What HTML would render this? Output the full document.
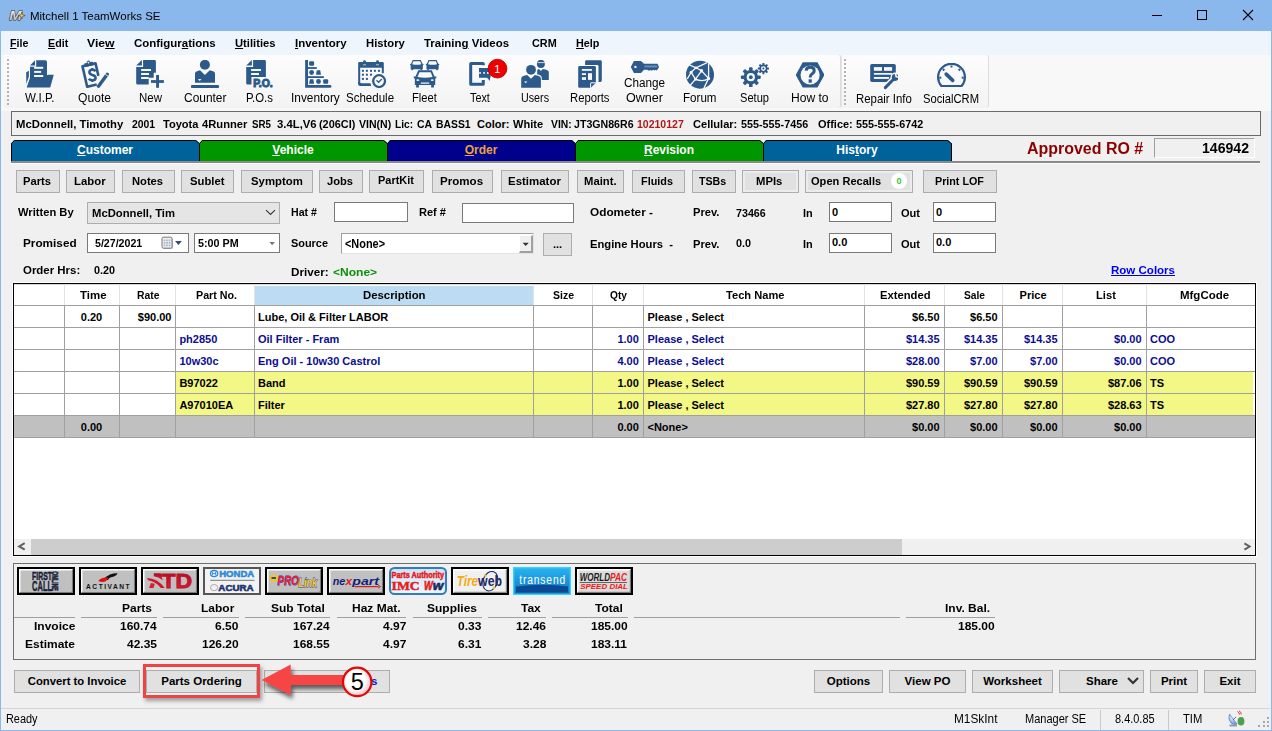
<!DOCTYPE html>
<html><head><meta charset="utf-8"><style>
html,body{margin:0;padding:0;width:1272px;height:731px;overflow:hidden;background:#f0f0f0;font-family:"Liberation Sans", sans-serif}
.a{position:absolute;display:block}
.t{position:absolute;white-space:pre;font-family:"Liberation Sans", sans-serif}
u{text-decoration:underline;text-underline-offset:1px}
</style></head><body>
<div class="a" style="left:0px;top:0px;width:1272px;height:31px;background:#8bb8ec"></div>
<div class="a" style="left:0px;top:31px;width:1272px;height:24px;background:#eef5fd"></div>
<div class="a" style="left:0px;top:55px;width:1272px;height:56px;background:#f8f8f8"></div>
<div class="a" style="left:0px;top:0px;width:1px;height:731px;background:#8bb8ec"></div>
<div class="a" style="left:1271px;top:0px;width:1px;height:731px;background:#8bb8ec"></div>
<div class="a" style="left:0px;top:730px;width:1272px;height:1px;background:#8bb8ec"></div>
<svg class="a" style="left:8px;top:8px" width="18" height="14" viewBox="0 0 18 14"><defs><linearGradient id="mg" x1="0" y1="0" x2="0" y2="1"><stop offset="0" stop-color="#f4f4f4"/><stop offset="1" stop-color="#b8b8b8"/></linearGradient></defs><text x="1.2" y="11.8" font-family="Liberation Sans" font-weight="bold" font-style="italic" font-size="13" textLength="12.5" lengthAdjust="spacingAndGlyphs" fill="url(#mg)" stroke="#2a2a2a" stroke-width="0.9" paint-order="stroke">M</text><path d="M13.8 4 L14.7 6.8 L17.2 7.6 L14.7 8.4 L13.8 11 L12.9 8.4 L10.4 7.6 L12.9 6.8 Z" fill="#f8c850" stroke="#3a2a10" stroke-width="0.5"/></svg>
<div class="t" style="left:30.20px;top:11px;font-size:11.5px;line-height:11.5px;font-weight:normal;color:#000;transform:scaleX(0.9992);transform-origin:0 0;">Mitchell 1 TeamWorks SE</div>
<div class="a" style="left:1152px;top:15px;width:10px;height:1px;background:#000"></div>
<div class="a" style="left:1197px;top:10px;width:10px;height:10px;border:1px solid #000;box-sizing:border-box"></div>
<svg class="a" style="left:1242px;top:9px" width="12" height="12" viewBox="0 0 12 12"><path d="M1 1 L11 11 M11 1 L1 11" stroke="#000" stroke-width="1.1"/></svg>
<div class="t" style="left:10.00px;top:38px;font-size:11.5px;line-height:11.5px;font-weight:bold;color:#000;transform:scaleX(0.9293);transform-origin:0 0;"><u>F</u>ile</div>
<div class="t" style="left:47.80px;top:38px;font-size:11.5px;line-height:11.5px;font-weight:bold;color:#000;transform:scaleX(0.9309);transform-origin:0 0;"><u>E</u>dit</div>
<div class="t" style="left:87.30px;top:38px;font-size:11.5px;line-height:11.5px;font-weight:bold;color:#000;transform:scaleX(1.0613);transform-origin:0 0;">Vie<u>w</u></div>
<div class="t" style="left:134.00px;top:38px;font-size:11.5px;line-height:11.5px;font-weight:bold;color:#000;transform:scaleX(0.9976);transform-origin:0 0;">Configur<u>a</u>tions</div>
<div class="t" style="left:235.00px;top:38px;font-size:11.5px;line-height:11.5px;font-weight:bold;color:#000;transform:scaleX(0.9759);transform-origin:0 0;"><u>U</u>tilities</div>
<div class="t" style="left:295.20px;top:38px;font-size:11.5px;line-height:11.5px;font-weight:bold;color:#000;transform:scaleX(0.9961);transform-origin:0 0;"><u>I</u>nventory</div>
<div class="t" style="left:366.00px;top:38px;font-size:11.5px;line-height:11.5px;font-weight:bold;color:#000;transform:scaleX(0.9798);transform-origin:0 0;">History</div>
<div class="t" style="left:424.30px;top:38px;font-size:11.5px;line-height:11.5px;font-weight:bold;color:#000;transform:scaleX(0.9953);transform-origin:0 0;">Trainin<u>g</u> Videos</div>
<div class="t" style="left:532.00px;top:38px;font-size:11.5px;line-height:11.5px;font-weight:bold;color:#000;transform:scaleX(0.9427);transform-origin:0 0;">CRM</div>
<div class="t" style="left:576.00px;top:38px;font-size:11.5px;line-height:11.5px;font-weight:bold;color:#000;transform:scaleX(0.9398);transform-origin:0 0;"><u>H</u>elp</div>
<div class="a" style="left:4px;top:55px;width:836px;height:53px;background:linear-gradient(#fdfdfd,#f3f3f3);border-right:1px solid #dcdcdc;border-radius:0 3px 3px 0"></div>
<div class="a" style="left:841px;top:55px;width:146px;height:53px;background:linear-gradient(#fdfdfd,#f3f3f3);border-right:1px solid #dcdcdc;border-left:1px solid #e4e4e4;border-radius:0 3px 3px 0"></div>
<div class="a" style="left:7px;top:59px;width:2px;height:2px;background:#b4b4b4"></div>
<div class="a" style="left:7px;top:63px;width:2px;height:2px;background:#b4b4b4"></div>
<div class="a" style="left:7px;top:67px;width:2px;height:2px;background:#b4b4b4"></div>
<div class="a" style="left:7px;top:71px;width:2px;height:2px;background:#b4b4b4"></div>
<div class="a" style="left:7px;top:75px;width:2px;height:2px;background:#b4b4b4"></div>
<div class="a" style="left:7px;top:79px;width:2px;height:2px;background:#b4b4b4"></div>
<div class="a" style="left:7px;top:83px;width:2px;height:2px;background:#b4b4b4"></div>
<div class="a" style="left:7px;top:87px;width:2px;height:2px;background:#b4b4b4"></div>
<div class="a" style="left:7px;top:91px;width:2px;height:2px;background:#b4b4b4"></div>
<div class="a" style="left:7px;top:95px;width:2px;height:2px;background:#b4b4b4"></div>
<div class="a" style="left:7px;top:99px;width:2px;height:2px;background:#b4b4b4"></div>
<div class="a" style="left:7px;top:103px;width:2px;height:2px;background:#b4b4b4"></div>
<div class="a" style="left:844px;top:59px;width:2px;height:2px;background:#b4b4b4"></div>
<div class="a" style="left:844px;top:63px;width:2px;height:2px;background:#b4b4b4"></div>
<div class="a" style="left:844px;top:67px;width:2px;height:2px;background:#b4b4b4"></div>
<div class="a" style="left:844px;top:71px;width:2px;height:2px;background:#b4b4b4"></div>
<div class="a" style="left:844px;top:75px;width:2px;height:2px;background:#b4b4b4"></div>
<div class="a" style="left:844px;top:79px;width:2px;height:2px;background:#b4b4b4"></div>
<div class="a" style="left:844px;top:83px;width:2px;height:2px;background:#b4b4b4"></div>
<div class="a" style="left:844px;top:87px;width:2px;height:2px;background:#b4b4b4"></div>
<div class="a" style="left:844px;top:91px;width:2px;height:2px;background:#b4b4b4"></div>
<div class="a" style="left:844px;top:95px;width:2px;height:2px;background:#b4b4b4"></div>
<div class="a" style="left:844px;top:99px;width:2px;height:2px;background:#b4b4b4"></div>
<div class="a" style="left:844px;top:103px;width:2px;height:2px;background:#b4b4b4"></div>
<svg class="a" style="left:26px;top:60px" width="28" height="28" viewBox="0 0 28 28"><path d="M4 5.6 L9 0.3 V5.6 Z" fill="#2c5a8a"/><path d="M4 6.8 H10.2 V0.2 H19.5 Q21 0.2 21 1.7 V15.3 L22.3 14.7 H27.8 L24.2 27.5 H0.7 L4 17.7 Z" fill="#2c5a8a"/><rect x="8.1" y="6.8" width="9.1" height="2" fill="#f8f8f8"/><rect x="8.1" y="10.9" width="7" height="2" fill="#f8f8f8"/><rect x="8.1" y="15" width="9.1" height="2" fill="#f8f8f8"/><path d="M0.2 12.3 L2.9 10.8 V16.5 L0.3 24 Z" fill="#2c5a8a"/></svg>
<svg class="a" style="left:81px;top:60px" width="28" height="28" viewBox="0 0 28 28"><g transform="rotate(-13 10 14)"><path d="M16.8 17.5 V4.6 H3.4 V25.6 H13.2" fill="none" stroke="#2c5a8a" stroke-width="2.6" stroke-linejoin="round"/><path d="M5.5 6 V3.2 Q5.5 2.2 6.5 2.2 H8.2 Q8.6 0.3 10.1 0.3 Q11.6 0.3 12 2.2 H13.7 Q14.7 2.2 14.7 3.2 V6 Z" fill="#2c5a8a"/><circle cx="10.1" cy="2.3" r="0.9" fill="#f8f8f8"/></g><path d="M14.6 11.2 Q13.6 9.8 11.4 9.8 Q8.4 9.8 8.4 12.3 Q8.4 14.2 11.4 15 Q14.6 15.7 14.6 18 Q14.6 20.3 11.4 20.3 Q8.9 20.3 7.8 18.8" fill="none" stroke="#2c5a8a" stroke-width="2.5"/><path d="M11.4 7.9 V10 M11.4 20 V22" stroke="#2c5a8a" stroke-width="2.2"/><path d="M17.5 26.2 L26.3 14.3" stroke="#2c5a8a" stroke-width="3.4" stroke-linecap="round"/><path d="M24.2 14.1 L27 16.2" stroke="#f8f8f8" stroke-width="0.9"/></svg>
<svg class="a" style="left:136px;top:60px" width="28" height="28" viewBox="0 0 28 28"><path d="M0.2 5.6 L5.9 0 V5.6 Z" fill="#2c5a8a"/><path d="M0.2 6.9 H7.1 V0 H18.5 Q19.9 0 19.9 1.4 V12.7 H17.7 V17.7 H12.7 V24.6 H1.6 Q0.2 24.6 0.2 23.2 Z" fill="#2c5a8a"/><rect x="5.1" y="9" width="9.9" height="2" fill="#f8f8f8"/><rect x="5.1" y="13" width="7.9" height="2" fill="#f8f8f8"/><rect x="5.1" y="17" width="7.6" height="2" fill="#f8f8f8"/><rect x="20.1" y="15" width="2.9" height="12.8" fill="#2c5a8a"/><rect x="15" y="20.1" width="12.9" height="2.8" fill="#2c5a8a"/></svg>
<svg class="a" style="left:191px;top:60px" width="28" height="28" viewBox="0 0 28 28"><circle cx="13.9" cy="4.8" r="5" fill="#2c5a8a"/><path d="M4 22.7 V13.5 Q4 11.8 6 11.2 L9 10.2 L13.9 15 L18.8 10.2 L22 11.2 Q24 11.8 24 13.5 V22.7 Z" fill="#2c5a8a"/><path d="M7 19 L10.5 19 L8.7 21 Z" fill="#f8f8f8"/><rect x="0" y="25.1" width="28" height="2.9" rx="0.8" fill="#2c5a8a"/></svg>
<svg class="a" style="left:246px;top:60px" width="30" height="28" viewBox="0 0 30 28"><path d="M0.2 5.6 L5.9 0 V5.6 Z" fill="#2c5a8a"/><path d="M0.2 6.9 H7.1 V0 H18.5 Q19.9 0 19.9 1.4 V17 H5.5 V24.6 H1.6 Q0.2 24.6 0.2 23.2 Z" fill="#2c5a8a"/><rect x="5.1" y="9" width="9.9" height="2" fill="#f8f8f8"/><rect x="5.1" y="13" width="7.9" height="2" fill="#f8f8f8"/><text x="7.2" y="27.4" font-family="Liberation Sans" font-weight="bold" font-size="11.3" textLength="19.5" lengthAdjust="spacingAndGlyphs" fill="#2c5a8a" stroke="#2c5a8a" stroke-width="1.1">P.O.</text></svg>
<svg class="a" style="left:305px;top:60px" width="28" height="28" viewBox="0 0 28 28"><path d="M1.6 0.2 V26.4 H25" fill="none" stroke="#2c5a8a" stroke-width="2.9" stroke-linecap="round"/><rect x="3" y="7.1" width="8.8" height="1.8" fill="#2c5a8a"/><rect x="3" y="16.2" width="15.9" height="1.8" fill="#2c5a8a"/><rect x="4.1" y="1.2" width="5" height="4.5" rx="1.2" fill="#2c5a8a"/><circle cx="6.6" cy="12.5" r="2.4" fill="#2c5a8a"/><path d="M11.8 10.3 H15.2 L16 14.7 H11 Z" fill="#2c5a8a"/><path d="M4.9 19.2 H8.3 L9.1 23.8 H4.1 Z" fill="#2c5a8a"/><circle cx="13.5" cy="21.5" r="2.4" fill="#2c5a8a"/><rect x="18.2" y="19.2" width="5" height="4.6" rx="1.2" fill="#2c5a8a"/></svg>
<svg class="a" style="left:358px;top:60px" width="28" height="28" viewBox="0 0 28 28"><path d="M12 24.4 H2.2 Q1.2 24.4 1.2 23.4 V7" fill="none" stroke="#2c5a8a" stroke-width="2"/><path d="M24.8 13.2 V7" fill="none" stroke="#2c5a8a" stroke-width="2"/><path d="M0.2 7.8 V3.2 Q0.2 1.9 1.5 1.9 H24.5 Q25.8 1.9 25.8 3.2 V7.8 Z" fill="#2c5a8a"/><circle cx="6.5" cy="1.6" r="1.4" fill="#2c5a8a"/><circle cx="19.5" cy="1.6" r="1.4" fill="#2c5a8a"/><path d="M5 4.8 H8 M18 4.8 H21" stroke="#f8f8f8" stroke-width="0.7"/><rect x="3.9000000000000004" y="9.8" width="2" height="2" fill="#2c5a8a"/><rect x="7.9" y="9.8" width="2" height="2" fill="#2c5a8a"/><rect x="12" y="9.8" width="2" height="2" fill="#2c5a8a"/><rect x="15.899999999999999" y="9.8" width="2" height="2" fill="#2c5a8a"/><rect x="20" y="9.8" width="2" height="2" fill="#2c5a8a"/><rect x="3.9000000000000004" y="13.7" width="2" height="2" fill="#2c5a8a"/><rect x="7.9" y="13.7" width="2" height="2" fill="#2c5a8a"/><rect x="12" y="13.7" width="2" height="2" fill="#2c5a8a"/><rect x="3.9000000000000004" y="17.9" width="2" height="2" fill="#2c5a8a"/><rect x="7.9" y="17.9" width="2" height="2" fill="#2c5a8a"/><path d="M0.2 22 V24 Q0.2 26 2.5 26 H13.2 L12.6 23.4 H3.6 Q2.2 23.4 1.8 22 Z" fill="#2c5a8a"/><circle cx="21.1" cy="21.1" r="7.4" fill="#f8f8f8"/><circle cx="21.1" cy="21.1" r="5.9" fill="none" stroke="#2c5a8a" stroke-width="2.2"/><path d="M18.5 20.2 L20.6 22.3 L23.8 19" fill="none" stroke="#2c5a8a" stroke-width="1.3"/></svg>
<svg class="a" style="left:410px;top:60px" width="30" height="28" viewBox="0 0 30 28"><g transform="translate(-0.2 0) scale(0.58 0.64)"><path d="M5 0 H19 L21.8 6 L23.8 6.2 L23.5 7.6 L22.5 8.2 V14.5 H21.2 V16.8 H18.3 V14.5 H5.7 V16.8 H2.8 V14.5 H1.5 V8.2 L0.5 7.6 L0.2 6.2 L2.2 6 Z" fill="#2c5a8a"/><path d="M6.2 2 H17.8 L19.8 6.6 Q12 8.2 4.2 6.6 Z" fill="#f8f8f8"/></g><g transform="translate(15.6 0) scale(0.58 0.64)"><path d="M5 0 H19 L21.8 6 L23.8 6.2 L23.5 7.6 L22.5 8.2 V14.5 H21.2 V16.8 H18.3 V14.5 H5.7 V16.8 H2.8 V14.5 H1.5 V8.2 L0.5 7.6 L0.2 6.2 L2.2 6 Z" fill="#2c5a8a"/><path d="M6.2 2 H17.8 L19.8 6.6 Q12 8.2 4.2 6.6 Z" fill="#f8f8f8"/></g><rect x="1" y="10.2" width="29" height="1.2" fill="#f8f8f8"/><g transform="translate(3.4 10.3) scale(0.97 1.02)"><path d="M5 0 H19 L21.8 6 L23.8 6.2 L23.5 7.6 L22.5 8.2 V14.5 H21.2 V16.8 H18.3 V14.5 H5.7 V16.8 H2.8 V14.5 H1.5 V8.2 L0.5 7.6 L0.2 6.2 L2.2 6 Z" fill="#2c5a8a"/><path d="M6.2 2 H17.8 L19.8 6.6 Q12 8.2 4.2 6.6 Z" fill="#f8f8f8"/><ellipse cx="4.6" cy="9.6" rx="1.6" ry="0.9" fill="#f8f8f8"/><ellipse cx="19.4" cy="9.6" rx="1.6" ry="0.9" fill="#f8f8f8"/><rect x="7.5" y="11.9" width="9" height="1.2" rx="0.6" fill="#f8f8f8"/></g></svg>
<svg class="a" style="left:466px;top:58px" width="44" height="32" viewBox="0 0 44 32"><path d="M18.8 7.3 V5.8 Q18.8 3.9 16.9 3.9 H5 Q3.2 3.9 3.2 5.8 V25.9 Q3.2 27.8 5 27.8 H16.9 Q18.8 27.8 18.8 25.9 V22.1 H15.8 V24.8 H6.2 V6.9 H15.8 V7.3 Z" fill="#2c5a8a"/><path d="M13 10 H24.6 V19.7 H24 V22.9 L21 19.7 H13 Z" rx="1" fill="#2c5a8a"/><rect x="13.2" y="14.1" width="1.7" height="1.7" fill="#f8f8f8"/><rect x="17.2" y="14.1" width="1.7" height="1.7" fill="#f8f8f8"/><rect x="21" y="14.1" width="1.7" height="1.7" fill="#f8f8f8"/><circle cx="31.5" cy="10.6" r="9.4" fill="#ee0000" stroke="#a80000" stroke-width="0.8"/><text x="31.3" y="14.5" font-family="Liberation Sans" font-size="11" fill="#fff" text-anchor="middle">1</text></svg>
<svg class="a" style="left:521px;top:60px" width="28" height="28" viewBox="0 0 28 28"><circle cx="19.9" cy="3.9" r="4" fill="#2c5a8a"/><path d="M16.5 2.6 H24.5" stroke="#f8f8f8" stroke-width="0.8"/><path d="M16.2 19.9 V11 Q16.2 9.2 18 9 L19.9 11 L21.8 9 Q27.8 9.8 27.8 12 V19.9 Z" fill="#2c5a8a" stroke="#f8f8f8" stroke-width="0"/><circle cx="10" cy="9.8" r="5.9" fill="#f8f8f8"/><circle cx="10" cy="9.8" r="4.9" fill="#2c5a8a"/><path d="M-0.8 28.6 V18.2 Q-0.8 15.4 3 14.6 L6 14 L10 18 L14 14 L17 14.6 Q20.8 15.4 20.8 18.2 V28.6 Z" fill="#f8f8f8"/><path d="M0.2 27.8 V18.5 Q0.2 16.5 3 15.8 L6.2 15 L10 18.8 L13.8 15 L17 15.8 Q19.9 16.5 19.9 18.5 V27.8 Z" fill="#2c5a8a"/><path d="M3 21.4 L6.4 21.4 L4.7 23.2 Z" fill="#f8f8f8"/></svg>
<svg class="a" style="left:578px;top:60px" width="28" height="28" viewBox="0 0 28 28"><path d="M7.1 1.6 Q7.1 0.2 8.5 0.2 H22.4 Q23.8 0.2 23.8 1.6 V20.5 Q23.8 21.9 22.4 21.9 H20.5 V6 Q20.5 5 19 5 H7.1 Z" fill="#2c5a8a"/><path d="M0.2 7.5 Q0.2 6.1 1.6 6.1 H16.5 Q17.9 6.1 17.9 7.5 V22.8 L12.8 27.8 H1.6 Q0.2 27.8 0.2 26.4 Z" fill="#2c5a8a"/><path d="M12.6 27.8 V23.2 Q12.6 22.8 13 22.8 H17.9" fill="none" stroke="#f8f8f8" stroke-width="1"/><rect x="3.9" y="9" width="10.1" height="1.8" fill="#f8f8f8"/><rect x="3.9" y="13.2" width="4.1" height="1.8" fill="#f8f8f8"/><rect x="3.9" y="17.2" width="4.1" height="2.7" fill="#f8f8f8"/><rect x="10" y="13.2" width="4" height="6.7" fill="#f8f8f8"/></svg>
<svg class="a" style="left:630px;top:60px" width="30" height="14" viewBox="0 0 30 14"><path d="M0.8 7 L3.9 1 H11 L14 3.7 H27.5 L29 6.9 L27.6 9.6 L26.6 10.4 L25.6 9.8 L24.6 10.6 L23.2 9.8 L21.8 10.8 L20.3 9.9 L18.8 10.8 L17.3 9.7 H14 L11 13 H3.9 Z" fill="#2c5a8a"/><circle cx="5.4" cy="6.9" r="1.2" fill="#f8f8f8"/><rect x="14.4" y="5.5" width="12.8" height="1.9" fill="#6b8eb3"/></svg>
<svg class="a" style="left:686px;top:60px" width="29" height="30" viewBox="0 0 29 30"><circle cx="14" cy="14.7" r="14" fill="#2c5a8a"/><g stroke="#f8f8f8" stroke-width="1.3" fill="none" stroke-linecap="round"><path d="M3.9 5.1 L10 7.8 L20.6 2.9"/><path d="M5.1 12.3 L10 7.8 L15.5 10.8 L22.6 18.4 L22.6 3.9"/><path d="M5.1 12.3 L9.5 19.2 L15.5 10.8"/><path d="M5.1 12.3 L1.5 18.5"/><path d="M9.5 19.2 L4.5 25"/><path d="M9.5 19.2 Q17 22.5 22.6 18.4"/><path d="M22.6 18.4 L18 28"/></g><g fill="#f8f8f8"><circle cx="5.1" cy="12.3" r="1.5"/><circle cx="10" cy="7.8" r="1.3"/><circle cx="15.5" cy="10.8" r="1.7"/><circle cx="22.6" cy="18.4" r="1.5"/><circle cx="9.5" cy="19.2" r="1.5"/></g></svg>
<svg class="a" style="left:740px;top:60px" width="30" height="30" viewBox="0 0 30 30"><circle cx="10.8" cy="17.2" r="7.3" fill="#2c5a8a"/><rect x="9.0" y="7.299999999999999" width="3.6" height="3.6000000000000005" rx="0.9" fill="#2c5a8a" transform="rotate(0.0 10.8 17.2)"/><rect x="9.0" y="7.299999999999999" width="3.6" height="3.6000000000000005" rx="0.9" fill="#2c5a8a" transform="rotate(45.0 10.8 17.2)"/><rect x="9.0" y="7.299999999999999" width="3.6" height="3.6000000000000005" rx="0.9" fill="#2c5a8a" transform="rotate(90.0 10.8 17.2)"/><rect x="9.0" y="7.299999999999999" width="3.6" height="3.6000000000000005" rx="0.9" fill="#2c5a8a" transform="rotate(135.0 10.8 17.2)"/><rect x="9.0" y="7.299999999999999" width="3.6" height="3.6000000000000005" rx="0.9" fill="#2c5a8a" transform="rotate(180.0 10.8 17.2)"/><rect x="9.0" y="7.299999999999999" width="3.6" height="3.6000000000000005" rx="0.9" fill="#2c5a8a" transform="rotate(225.0 10.8 17.2)"/><rect x="9.0" y="7.299999999999999" width="3.6" height="3.6000000000000005" rx="0.9" fill="#2c5a8a" transform="rotate(270.0 10.8 17.2)"/><rect x="9.0" y="7.299999999999999" width="3.6" height="3.6000000000000005" rx="0.9" fill="#2c5a8a" transform="rotate(315.0 10.8 17.2)"/><circle cx="10.8" cy="17.2" r="4.1" fill="#f8f8f8"/><circle cx="10.8" cy="17.2" r="1.9" fill="#2c5a8a"/><circle cx="23.4" cy="8.6" r="4.0" fill="#2c5a8a"/><rect x="22.4" y="3.0" width="2.0" height="2.5999999999999996" rx="0.5" fill="#2c5a8a" transform="rotate(0.0 23.4 8.6)"/><rect x="22.4" y="3.0" width="2.0" height="2.5999999999999996" rx="0.5" fill="#2c5a8a" transform="rotate(45.0 23.4 8.6)"/><rect x="22.4" y="3.0" width="2.0" height="2.5999999999999996" rx="0.5" fill="#2c5a8a" transform="rotate(90.0 23.4 8.6)"/><rect x="22.4" y="3.0" width="2.0" height="2.5999999999999996" rx="0.5" fill="#2c5a8a" transform="rotate(135.0 23.4 8.6)"/><rect x="22.4" y="3.0" width="2.0" height="2.5999999999999996" rx="0.5" fill="#2c5a8a" transform="rotate(180.0 23.4 8.6)"/><rect x="22.4" y="3.0" width="2.0" height="2.5999999999999996" rx="0.5" fill="#2c5a8a" transform="rotate(225.0 23.4 8.6)"/><rect x="22.4" y="3.0" width="2.0" height="2.5999999999999996" rx="0.5" fill="#2c5a8a" transform="rotate(270.0 23.4 8.6)"/><rect x="22.4" y="3.0" width="2.0" height="2.5999999999999996" rx="0.5" fill="#2c5a8a" transform="rotate(315.0 23.4 8.6)"/><circle cx="23.4" cy="8.6" r="2.4" fill="#f8f8f8"/><circle cx="23.4" cy="8.6" r="1" fill="#2c5a8a"/></svg>
<svg class="a" style="left:796px;top:62px" width="28" height="26" viewBox="0 0 28 26"><path d="M7.1 0.9 H21.1 L27.8 13 L21.1 25 H7.1 L0.4 13 Z" fill="#2c5a8a" stroke="#2c5a8a" stroke-width="1.2" stroke-linejoin="round"/><circle cx="14.1" cy="13" r="9.6" fill="#f8f8f8"/><path d="M10.1 8.6 Q10.5 5.3 14.2 5.3 Q18.2 5.3 18.2 8.6 Q18.2 10.8 15.9 12 Q14.2 13 14.2 15.6" fill="none" stroke="#2c5a8a" stroke-width="3"/><rect x="12.6" y="17.3" width="3.2" height="3.4" fill="#2c5a8a"/></svg>
<svg class="a" style="left:870px;top:63px" width="28" height="27" viewBox="0 0 28 27"><rect x="0.2" y="0.9" width="25.6" height="18" rx="1.6" fill="#2c5a8a"/><rect x="3.9" y="4.1" width="8.1" height="3.7" fill="#f8f8f8"/><rect x="14" y="4.1" width="8.1" height="3.7" fill="#f8f8f8"/><rect x="3.9" y="10" width="18.2" height="1.7" fill="#f8f8f8"/><rect x="3.9" y="14" width="15.1" height="1.9" fill="#f8f8f8"/><path d="M13.5 26.5 L25 15" stroke="#f8f8f8" stroke-width="6.5"/><circle cx="25.3" cy="14.3" r="4.8" fill="#f8f8f8"/><path d="M15.3 24.6 L23.6 16.3" stroke="#2c5a8a" stroke-width="3" stroke-linecap="round"/><circle cx="25.2" cy="14.5" r="3.4" fill="#2c5a8a"/><path d="M25.6 10.6 L26.2 13.8 L29.3 14.2" stroke="#f8f8f8" stroke-width="1.6" fill="none" stroke-linejoin="round"/></svg>
<svg class="a" style="left:937px;top:63px" width="30" height="25" viewBox="0 0 30 25"><path d="M4.4 23 A13.4 13.4 0 1 1 24.6 23 Z" fill="none" stroke="#2c5a8a" stroke-width="2.2" stroke-linejoin="round"/><path d="M4.30 14.70 L2.30 14.70" stroke="#2c5a8a" stroke-width="2"/><path d="M7.29 7.49 L5.87 6.07" stroke="#2c5a8a" stroke-width="2"/><path d="M14.50 4.50 L14.50 2.50" stroke="#2c5a8a" stroke-width="2"/><path d="M21.71 7.49 L23.13 6.07" stroke="#2c5a8a" stroke-width="2"/><path d="M24.70 14.70 L26.70 14.70" stroke="#2c5a8a" stroke-width="2"/><path d="M9.2 11.1 L15.7 17.4" stroke="#2c5a8a" stroke-width="3.6" stroke-linecap="round"/></svg>
<div class="t" style="left:25.30px;top:92px;font-size:12px;line-height:12px;font-weight:normal;color:#000;transform:scaleX(0.9639);transform-origin:0 0;">W.I.P.</div>
<div class="t" style="left:78.00px;top:92px;font-size:12px;line-height:12px;font-weight:normal;color:#000;transform:scaleX(1.0092);transform-origin:0 0;">Quote</div>
<div class="t" style="left:138.50px;top:92px;font-size:12px;line-height:12px;font-weight:normal;color:#000;transform:scaleX(0.9542);transform-origin:0 0;">New</div>
<div class="t" style="left:183.50px;top:92px;font-size:12px;line-height:12px;font-weight:normal;color:#000;transform:scaleX(0.9953);transform-origin:0 0;">Counter</div>
<div class="t" style="left:246.00px;top:92px;font-size:12px;line-height:12px;font-weight:normal;color:#000;transform:scaleX(0.9474);transform-origin:0 0;">P.O.s</div>
<div class="t" style="left:290.60px;top:92px;font-size:12px;line-height:12px;font-weight:normal;color:#000;transform:scaleX(0.9879);transform-origin:0 0;">Inventory</div>
<div class="t" style="left:346.00px;top:92px;font-size:12px;line-height:12px;font-weight:normal;color:#000;transform:scaleX(0.9600);transform-origin:0 0;">Schedule</div>
<div class="t" style="left:412.00px;top:92px;font-size:12px;line-height:12px;font-weight:normal;color:#000;transform:scaleX(0.9288);transform-origin:0 0;">Fleet</div>
<div class="t" style="left:470.00px;top:92px;font-size:12px;line-height:12px;font-weight:normal;color:#000;transform:scaleX(0.9000);transform-origin:0 0;">Text</div>
<div class="t" style="left:521.00px;top:92px;font-size:12px;line-height:12px;font-weight:normal;color:#000;transform:scaleX(0.8946);transform-origin:0 0;">Users</div>
<div class="t" style="left:570.00px;top:92px;font-size:12px;line-height:12px;font-weight:normal;color:#000;transform:scaleX(0.9405);transform-origin:0 0;">Reports</div>
<div class="t" style="left:626.00px;top:92px;font-size:12px;line-height:12px;font-weight:normal;color:#000;transform:scaleX(1.0482);transform-origin:0 0;">Owner</div>
<div class="t" style="left:682.50px;top:92px;font-size:12px;line-height:12px;font-weight:normal;color:#000;transform:scaleX(0.9654);transform-origin:0 0;">Forum</div>
<div class="t" style="left:740.00px;top:92px;font-size:12px;line-height:12px;font-weight:normal;color:#000;transform:scaleX(0.9236);transform-origin:0 0;">Setup</div>
<div class="t" style="left:790.50px;top:92px;font-size:12px;line-height:12px;font-weight:normal;color:#000;transform:scaleX(1.0054);transform-origin:0 0;">How to</div>
<div class="t" style="left:624.00px;top:77px;font-size:12px;line-height:12px;font-weight:normal;color:#000;transform:scaleX(0.9762);transform-origin:0 0;">Change</div>
<div class="t" style="left:855.70px;top:93px;font-size:12px;line-height:12px;font-weight:normal;color:#000;transform:scaleX(0.9506);transform-origin:0 0;">Repair Info</div>
<div class="t" style="left:923.00px;top:93px;font-size:12px;line-height:12px;font-weight:normal;color:#000;transform:scaleX(0.9333);transform-origin:0 0;">SocialCRM</div>
<div class="a" style="left:11px;top:111px;width:1250px;height:25px;border:1px solid #6a6a6a;box-sizing:border-box;background:#f0f0f0"></div>
<div class="t" style="left:15.70px;top:119px;font-size:11px;line-height:11px;font-weight:bold;color:#000;transform:scaleX(1.0288);transform-origin:0 0;">McDonnell, Timothy</div>
<div class="t" style="left:132.10px;top:119px;font-size:11px;line-height:11px;font-weight:bold;color:#000;transform:scaleX(0.9429);transform-origin:0 0;">2001</div>
<div class="t" style="left:162.60px;top:119px;font-size:11px;line-height:11px;font-weight:bold;color:#000;transform:scaleX(1.0057);transform-origin:0 0;">Toyota</div>
<div class="t" style="left:202.40px;top:119px;font-size:11px;line-height:11px;font-weight:bold;color:#000;transform:scaleX(1.0179);transform-origin:0 0;">4Runner</div>
<div class="t" style="left:251.90px;top:119px;font-size:11px;line-height:11px;font-weight:bold;color:#000;transform:scaleX(0.8879);transform-origin:0 0;">SR5</div>
<div class="t" style="left:276.70px;top:119px;font-size:11px;line-height:11px;font-weight:bold;color:#000;transform:scaleX(1.0286);transform-origin:0 0;">3.4L,V6</div>
<div class="t" style="left:318.80px;top:119px;font-size:11px;line-height:11px;font-weight:bold;color:#000;transform:scaleX(0.9891);transform-origin:0 0;">(206CI)</div>
<div class="t" style="left:359.20px;top:119px;font-size:11px;line-height:11px;font-weight:bold;color:#000;transform:scaleX(0.9583);transform-origin:0 0;">VIN(N)</div>
<div class="t" style="left:395.40px;top:119px;font-size:11px;line-height:11px;font-weight:bold;color:#000;transform:scaleX(0.9235);transform-origin:0 0;">Lic:</div>
<div class="t" style="left:416.90px;top:119px;font-size:11px;line-height:11px;font-weight:bold;color:#000;transform:scaleX(0.9497);transform-origin:0 0;">CA</div>
<div class="t" style="left:435.90px;top:119px;font-size:11px;line-height:11px;font-weight:bold;color:#000;transform:scaleX(0.9428);transform-origin:0 0;">BASS1</div>
<div class="t" style="left:477.10px;top:119px;font-size:11px;line-height:11px;font-weight:bold;color:#000;transform:scaleX(1.0000);transform-origin:0 0;">Color:</div>
<div class="t" style="left:513.10px;top:119px;font-size:11px;line-height:11px;font-weight:bold;color:#000;transform:scaleX(1.0067);transform-origin:0 0;">White</div>
<div class="t" style="left:550.70px;top:119px;font-size:11px;line-height:11px;font-weight:bold;color:#000;transform:scaleX(0.9409);transform-origin:0 0;">VIN:</div>
<div class="t" style="left:573.80px;top:119px;font-size:11px;line-height:11px;font-weight:bold;color:#000;transform:scaleX(0.9643);transform-origin:0 0;">JT3GN86R6</div>
<div class="t" style="left:693.20px;top:119px;font-size:11px;line-height:11px;font-weight:bold;color:#000;transform:scaleX(1.0068);transform-origin:0 0;">Cellular:</div>
<div class="t" style="left:741.30px;top:119px;font-size:11px;line-height:11px;font-weight:bold;color:#000;transform:scaleX(0.9810);transform-origin:0 0;">555-555-7456</div>
<div class="t" style="left:818.40px;top:119px;font-size:11px;line-height:11px;font-weight:bold;color:#000;transform:scaleX(0.9971);transform-origin:0 0;">Office:</div>
<div class="t" style="left:856.40px;top:119px;font-size:11px;line-height:11px;font-weight:bold;color:#000;transform:scaleX(0.9810);transform-origin:0 0;">555-555-6742</div>
<div class="t" style="left:636.60px;top:119px;font-size:11px;line-height:11px;font-weight:bold;color:#b01818;transform:scaleX(0.9550);transform-origin:0 0;">10210127</div>
<svg class="a" style="left:0;top:0" width="1272" height="170"><path d="M11 161 V143.5 L14 140 H196 L199.5 143.5 V161 Z" fill="#00629a"/><path d="M11.5 161 V143.5 L14.5 140.5 H195.5 L199.5 143.5 V161" fill="none" stroke="#000" stroke-width="1"/><path d="M199 161 V143.5 L202 140 H384 L387.5 143.5 V161 Z" fill="#009600"/><path d="M199.5 161 V143.5 L202.5 140.5 H383.5 L387.5 143.5 V161" fill="none" stroke="#000" stroke-width="1"/><path d="M387 161 V143.5 L390 140 H572 L575.5 143.5 V161 Z" fill="#00008c"/><path d="M387.5 161 V143.5 L390.5 140.5 H571.5 L575.5 143.5 V161" fill="none" stroke="#000" stroke-width="1"/><path d="M575 161 V143.5 L578 140 H760 L763.5 143.5 V161 Z" fill="#009600"/><path d="M575.5 161 V143.5 L578.5 140.5 H759.5 L763.5 143.5 V161" fill="none" stroke="#000" stroke-width="1"/><path d="M763 161 V143.5 L766 140 H948 L951.5 143.5 V161 Z" fill="#00629a"/><path d="M763.5 161 V143.5 L766.5 140.5 H947.5 L951.5 143.5 V161" fill="none" stroke="#000" stroke-width="1"/></svg>
<div class="t" style="left:-195.00px;width:600px;text-align:center;top:144.00px;font-size:12px;line-height:12px;font-weight:bold;color:#fff;"><u>C</u>ustomer</div>
<div class="t" style="left:-7.00px;width:600px;text-align:center;top:144.00px;font-size:12px;line-height:12px;font-weight:bold;color:#fff;"><u>V</u>ehicle</div>
<div class="t" style="left:181.00px;width:600px;text-align:center;top:144.00px;font-size:12px;line-height:12px;font-weight:bold;color:#e9a33a;"><u>O</u>rder</div>
<div class="t" style="left:369.00px;width:600px;text-align:center;top:144.00px;font-size:12px;line-height:12px;font-weight:bold;color:#fff;"><u>R</u>evision</div>
<div class="t" style="left:557.00px;width:600px;text-align:center;top:144.00px;font-size:12px;line-height:12px;font-weight:bold;color:#fff;">His<u>t</u>ory</div>
<div class="a" style="left:11px;top:161px;width:1249px;height:2px;background:#8a8a8a"></div>
<div class="a" style="left:11px;top:163px;width:1249px;height:1px;background:#fafafa"></div>
<div class="t" style="left:1026.70px;top:141px;font-size:16px;line-height:16px;font-weight:bold;color:#8c0000;transform:scaleX(0.9974);transform-origin:0 0;">Approved RO #</div>
<div class="a" style="left:1154px;top:138px;width:101px;height:20px;border-top:1px solid #a0a0a0;border-left:1px solid #a0a0a0;border-bottom:1px solid #fff;border-right:1px solid #fff;box-sizing:border-box"></div>
<div class="t" style="left:1202.00px;top:141px;font-size:14.5px;line-height:14.5px;font-weight:bold;color:#000;transform:scaleX(0.9711);transform-origin:0 0;">146942</div>
<div class="a" style="left:16px;top:170px;width:44px;height:23px;background:#e1e1e1;border:1px solid #adadad;box-sizing:border-box;"></div>
<div class="t" style="left:-262.00px;width:600px;text-align:center;top:176.00px;font-size:11.5px;line-height:11.5px;font-weight:bold;color:#000;"></div>
<div class="t" style="left:23.40px;top:176px;font-size:11.5px;line-height:11.5px;font-weight:bold;color:#000;transform:scaleX(0.9722);transform-origin:0 0;">Parts</div>
<div class="a" style="left:66px;top:170px;width:49px;height:23px;background:#e1e1e1;border:1px solid #adadad;box-sizing:border-box;"></div>
<div class="t" style="left:-209.50px;width:600px;text-align:center;top:176.00px;font-size:11.5px;line-height:11.5px;font-weight:bold;color:#000;"></div>
<div class="t" style="left:74.40px;top:176px;font-size:11.5px;line-height:11.5px;font-weight:bold;color:#000;transform:scaleX(0.9875);transform-origin:0 0;">Labor</div>
<div class="a" style="left:122px;top:170px;width:53px;height:23px;background:#e1e1e1;border:1px solid #adadad;box-sizing:border-box;"></div>
<div class="t" style="left:-151.50px;width:600px;text-align:center;top:176.00px;font-size:11.5px;line-height:11.5px;font-weight:bold;color:#000;"></div>
<div class="t" style="left:132.40px;top:176px;font-size:11.5px;line-height:11.5px;font-weight:bold;color:#000;transform:scaleX(0.9719);transform-origin:0 0;">Notes</div>
<div class="a" style="left:181px;top:170px;width:53px;height:23px;background:#e1e1e1;border:1px solid #adadad;box-sizing:border-box;"></div>
<div class="t" style="left:-92.50px;width:600px;text-align:center;top:176.00px;font-size:11.5px;line-height:11.5px;font-weight:bold;color:#000;"></div>
<div class="t" style="left:189.80px;top:176px;font-size:11.5px;line-height:11.5px;font-weight:bold;color:#000;transform:scaleX(0.9829);transform-origin:0 0;">Sublet</div>
<div class="a" style="left:241px;top:170px;width:72px;height:23px;background:#e1e1e1;border:1px solid #adadad;box-sizing:border-box;"></div>
<div class="t" style="left:-23.00px;width:600px;text-align:center;top:176.00px;font-size:11.5px;line-height:11.5px;font-weight:bold;color:#000;"></div>
<div class="t" style="left:250.80px;top:176px;font-size:11.5px;line-height:11.5px;font-weight:bold;color:#000;transform:scaleX(0.9885);transform-origin:0 0;">Symptom</div>
<div class="a" style="left:319px;top:170px;width:44px;height:23px;background:#e1e1e1;border:1px solid #adadad;box-sizing:border-box;"></div>
<div class="t" style="left:41.00px;width:600px;text-align:center;top:176.00px;font-size:11.5px;line-height:11.5px;font-weight:bold;color:#000;"></div>
<div class="t" style="left:327.20px;top:176px;font-size:11.5px;line-height:11.5px;font-weight:bold;color:#000;transform:scaleX(0.9701);transform-origin:0 0;">Jobs</div>
<div class="a" style="left:369px;top:170px;width:55px;height:23px;background:#e1e1e1;border:1px solid #adadad;box-sizing:border-box;"></div>
<div class="t" style="left:96.50px;width:600px;text-align:center;top:176.00px;font-size:11.5px;line-height:11.5px;font-weight:bold;color:#000;"></div>
<div class="t" style="left:378.10px;top:175px;font-size:11.5px;line-height:11.5px;font-weight:bold;color:#000;transform:scaleX(0.9523);transform-origin:0 0;">PartKit</div>
<div class="a" style="left:432px;top:170px;width:61px;height:23px;background:#e1e1e1;border:1px solid #adadad;box-sizing:border-box;"></div>
<div class="t" style="left:162.50px;width:600px;text-align:center;top:176.00px;font-size:11.5px;line-height:11.5px;font-weight:bold;color:#000;"></div>
<div class="t" style="left:440.40px;top:176px;font-size:11.5px;line-height:11.5px;font-weight:bold;color:#000;transform:scaleX(1.0070);transform-origin:0 0;">Promos</div>
<div class="a" style="left:501px;top:170px;width:68px;height:23px;background:#e1e1e1;border:1px solid #adadad;box-sizing:border-box;"></div>
<div class="t" style="left:235.00px;width:600px;text-align:center;top:176.00px;font-size:11.5px;line-height:11.5px;font-weight:bold;color:#000;"></div>
<div class="t" style="left:508.20px;top:176px;font-size:11.5px;line-height:11.5px;font-weight:bold;color:#000;transform:scaleX(0.9962);transform-origin:0 0;">Estimator</div>
<div class="a" style="left:577px;top:170px;width:47px;height:23px;background:#e1e1e1;border:1px solid #adadad;box-sizing:border-box;"></div>
<div class="t" style="left:300.50px;width:600px;text-align:center;top:176.00px;font-size:11.5px;line-height:11.5px;font-weight:bold;color:#000;"></div>
<div class="t" style="left:583.50px;top:176px;font-size:11.5px;line-height:11.5px;font-weight:bold;color:#000;transform:scaleX(0.9789);transform-origin:0 0;">Maint.</div>
<div class="a" style="left:632px;top:170px;width:53px;height:23px;background:#e1e1e1;border:1px solid #adadad;box-sizing:border-box;"></div>
<div class="t" style="left:358.50px;width:600px;text-align:center;top:176.00px;font-size:11.5px;line-height:11.5px;font-weight:bold;color:#000;"></div>
<div class="t" style="left:641.30px;top:176px;font-size:11.5px;line-height:11.5px;font-weight:bold;color:#000;transform:scaleX(0.9440);transform-origin:0 0;">Fluids</div>
<div class="a" style="left:692px;top:170px;width:44px;height:23px;background:#e1e1e1;border:1px solid #adadad;box-sizing:border-box;"></div>
<div class="t" style="left:414.00px;width:600px;text-align:center;top:176.00px;font-size:11.5px;line-height:11.5px;font-weight:bold;color:#000;"></div>
<div class="t" style="left:699.20px;top:176px;font-size:11.5px;line-height:11.5px;font-weight:bold;color:#000;transform:scaleX(0.9252);transform-origin:0 0;">TSBs</div>
<div class="a" style="left:742px;top:170px;width:57px;height:23px;background:#e1e1e1;border:1px solid #adadad;box-sizing:border-box;box-shadow:inset 0 0 0 2px #ececec"></div>
<div class="t" style="left:470.50px;width:600px;text-align:center;top:176.00px;font-size:11.5px;line-height:11.5px;font-weight:bold;color:#000;"></div>
<div class="t" style="left:756.30px;top:176px;font-size:11.5px;line-height:11.5px;font-weight:bold;color:#000;transform:scaleX(0.9813);transform-origin:0 0;">MPIs</div>
<div class="a" style="left:805px;top:170px;width:108px;height:23px;background:#e1e1e1;border:1px solid #adadad;box-sizing:border-box;box-shadow:inset 0 0 0 2px #ececec"></div>
<div class="t" style="left:559.00px;width:600px;text-align:center;top:176.00px;font-size:11.5px;line-height:11.5px;font-weight:bold;color:#000;"></div>
<div class="t" style="left:811.20px;top:176px;font-size:11.5px;line-height:11.5px;font-weight:bold;color:#000;transform:scaleX(0.9630);transform-origin:0 0;">Open Recalls</div>
<div class="a" style="left:890.6px;top:172.6px;width:16.8px;height:16.8px;border-radius:50%;background:#fff"></div>
<div class="t" style="left:599.00px;width:600px;text-align:center;top:177.00px;font-size:9px;line-height:9px;font-weight:bold;color:#3ac43a;">0</div>
<div class="a" style="left:923px;top:170px;width:74px;height:23px;background:#e1e1e1;border:1px solid #adadad;box-sizing:border-box;"></div>
<div class="t" style="left:660.00px;width:600px;text-align:center;top:176.00px;font-size:11.5px;line-height:11.5px;font-weight:bold;color:#000;"></div>
<div class="t" style="left:934.70px;top:176px;font-size:11.5px;line-height:11.5px;font-weight:bold;color:#000;transform:scaleX(0.9332);transform-origin:0 0;">Print LOF</div>
<div class="t" style="left:18.20px;top:207px;font-size:11px;line-height:11px;font-weight:bold;color:#000;transform:scaleX(1.0146);transform-origin:0 0;">Written By</div>
<div class="a" style="left:87px;top:202px;width:193px;height:22px;background:#e5e5e5;border:1px solid #adadad;box-sizing:border-box"></div>
<div class="t" style="left:91.50px;top:208px;font-size:11.5px;line-height:11.5px;font-weight:bold;color:#000;transform:scaleX(0.9788);transform-origin:0 0;">McDonnell, Tim</div>
<svg class="a" style="left:265px;top:209px" width="11" height="7" viewBox="0 0 11 7"><path d="M1 1.2 L5.5 5.5 L10 1.2" fill="none" stroke="#333" stroke-width="1.1"/></svg>
<div class="t" style="left:290.60px;top:207px;font-size:11px;line-height:11px;font-weight:bold;color:#000;transform:scaleX(0.9628);transform-origin:0 0;">Hat #</div>
<div class="a" style="left:334px;top:202px;width:74px;height:20px;background:#fff;border:1px solid #7a7a7a;box-sizing:border-box"></div>
<div class="t" style="left:419.00px;top:207px;font-size:11px;line-height:11px;font-weight:bold;color:#000;transform:scaleX(1.0037);transform-origin:0 0;">Ref #</div>
<div class="a" style="left:462px;top:203px;width:112px;height:20px;background:#fff;border:1px solid #7a7a7a;box-sizing:border-box"></div>
<div class="t" style="left:590.00px;top:207px;font-size:11px;line-height:11px;font-weight:bold;color:#000;transform:scaleX(1.0733);transform-origin:0 0;">Odometer -</div>
<div class="t" style="left:692.50px;top:207px;font-size:11px;line-height:11px;font-weight:bold;color:#000;transform:scaleX(1.0115);transform-origin:0 0;">Prev.</div>
<div class="t" style="left:736.00px;top:208px;font-size:11px;line-height:11px;font-weight:bold;color:#000;transform:scaleX(0.9706);transform-origin:0 0;">73466</div>
<div class="t" style="left:803.00px;top:208px;font-size:11px;line-height:11px;font-weight:bold;color:#000;transform:scaleX(0.9898);transform-origin:0 0;">In</div>
<div class="a" style="left:829px;top:202px;width:63px;height:20px;background:#fff;border:1px solid #7a7a7a;box-sizing:border-box"></div>
<div class="t" style="left:832.00px;top:207.00px;font-size:11px;line-height:11px;font-weight:bold;color:#000;">0</div>
<div class="t" style="left:901.00px;top:208px;font-size:11px;line-height:11px;font-weight:bold;color:#000;transform:scaleX(1.0053);transform-origin:0 0;">Out</div>
<div class="a" style="left:933px;top:202px;width:63px;height:20px;background:#fff;border:1px solid #7a7a7a;box-sizing:border-box"></div>
<div class="t" style="left:936.00px;top:207.00px;font-size:11px;line-height:11px;font-weight:bold;color:#000;">0</div>
<div class="t" style="left:23.00px;top:238px;font-size:11px;line-height:11px;font-weight:bold;color:#000;transform:scaleX(1.0699);transform-origin:0 0;">Promised</div>
<div class="a" style="left:87px;top:233px;width:102px;height:20px;background:#fff;border:1px solid #7a7a7a;box-sizing:border-box"></div>
<div class="t" style="left:95.00px;top:238px;font-size:11px;line-height:11px;font-weight:bold;color:#000;transform:scaleX(0.9652);transform-origin:0 0;">5/27/2021</div>
<svg class="a" style="left:160px;top:236px" width="24" height="15" viewBox="0 0 24 15"><rect x="3" y="2" width="10" height="11" rx="1.5" fill="#8a8a8a" opacity="0.5"/><rect x="2" y="1.2" width="10" height="11" rx="1.5" fill="#eef0f4" stroke="#6a6a6a" stroke-width="0.9"/><g fill="#b0bccc"><rect x="3.6" y="3.5" width="1.8" height="1.8"/><rect x="6.1" y="3.5" width="1.8" height="1.8"/><rect x="8.6" y="3.5" width="1.8" height="1.8"/><rect x="3.6" y="6" width="1.8" height="1.8"/><rect x="6.1" y="6" width="1.8" height="1.8"/><rect x="8.6" y="6" width="1.8" height="1.8"/><rect x="3.6" y="8.5" width="1.8" height="1.8"/><rect x="6.1" y="8.5" width="1.8" height="1.8"/><rect x="8.6" y="8.5" width="1.8" height="1.8"/></g><path d="M15 5 H21.9 L18.45 8.9 Z" fill="#3a4a6a"/></svg>
<div class="a" style="left:194px;top:233px;width:86px;height:20px;background:#fff;border:1px solid #7a7a7a;box-sizing:border-box"></div>
<div class="t" style="left:198.00px;top:238px;font-size:11px;line-height:11px;font-weight:bold;color:#000;transform:scaleX(0.9784);transform-origin:0 0;">5:00 PM</div>
<svg class="a" style="left:268px;top:241px" width="8" height="5" viewBox="0 0 8 5"><path d="M1.4 1.1 H6.9 L4.15 4.2 Z" fill="#777"/></svg>
<div class="t" style="left:291.30px;top:238px;font-size:11px;line-height:11px;font-weight:bold;color:#000;transform:scaleX(0.9920);transform-origin:0 0;">Source</div>
<div class="a" style="left:341px;top:233px;width:193px;height:21px;background:#fff;border-top:1px solid #a0a0a0;border-left:1px solid #a0a0a0;border-bottom:1px solid #e3e3e3;border-right:1px solid #e3e3e3;box-sizing:border-box"></div>
<div class="a" style="left:519px;top:235px;width:14px;height:18px;background:#f0f0f0;border-left:1px solid #fff;border-top:1px solid #fff;border-right:2px solid #a0a0a0;border-bottom:2px solid #a0a0a0;box-sizing:border-box"></div>
<svg class="a" style="left:519px;top:242px" width="14" height="6" viewBox="0 0 14 6"><path d="M3.6 0.8 H9.8 L6.7 4 Z" fill="#333"/></svg>
<div class="t" style="left:345.00px;top:238px;font-size:12px;line-height:12px;font-weight:bold;color:#000;transform:scaleX(0.9091);transform-origin:0 0;">&lt;None&gt;</div>
<div class="a" style="left:543px;top:233px;width:29px;height:23px;background:#e1e1e1;border:1px solid #adadad;box-sizing:border-box"></div>
<div class="t" style="left:257.50px;width:600px;text-align:center;top:239.00px;font-size:11px;line-height:11px;font-weight:bold;color:#000;">...</div>
<div class="t" style="left:590.00px;top:239px;font-size:11px;line-height:11px;font-weight:bold;color:#000;transform:scaleX(1.0209);transform-origin:0 0;">Engine Hours &nbsp;-</div>
<div class="t" style="left:692.50px;top:239px;font-size:11px;line-height:11px;font-weight:bold;color:#000;transform:scaleX(1.0115);transform-origin:0 0;">Prev.</div>
<div class="t" style="left:736.00px;top:238px;font-size:11px;line-height:11px;font-weight:bold;color:#000;transform:scaleX(0.9804);transform-origin:0 0;">0.0</div>
<div class="t" style="left:803.00px;top:239px;font-size:11px;line-height:11px;font-weight:bold;color:#000;transform:scaleX(0.9898);transform-origin:0 0;">In</div>
<div class="a" style="left:829px;top:233px;width:63px;height:20px;background:#fff;border:1px solid #7a7a7a;box-sizing:border-box"></div>
<div class="t" style="left:832.00px;top:237.00px;font-size:11px;line-height:11px;font-weight:bold;color:#000;">0.0</div>
<div class="t" style="left:901.00px;top:239px;font-size:11px;line-height:11px;font-weight:bold;color:#000;transform:scaleX(1.0053);transform-origin:0 0;">Out</div>
<div class="a" style="left:933px;top:233px;width:63px;height:20px;background:#fff;border:1px solid #7a7a7a;box-sizing:border-box"></div>
<div class="t" style="left:936.00px;top:237.00px;font-size:11px;line-height:11px;font-weight:bold;color:#000;">0.0</div>
<div class="t" style="left:23.00px;top:265px;font-size:11px;line-height:11px;font-weight:bold;color:#000;transform:scaleX(1.0400);transform-origin:0 0;">Order Hrs:</div>
<div class="t" style="left:93.90px;top:265px;font-size:11px;line-height:11px;font-weight:bold;color:#000;transform:scaleX(0.9813);transform-origin:0 0;">0.20</div>
<div class="t" style="left:291.30px;top:267px;font-size:11px;line-height:11px;font-weight:bold;color:#000;transform:scaleX(1.0620);transform-origin:0 0;">Driver:</div>
<div class="t" style="left:332.80px;top:267px;font-size:11px;line-height:11px;font-weight:bold;color:#0a900a;transform:scaleX(1.0943);transform-origin:0 0;">&lt;None&gt;</div>
<div class="t" style="left:1111.00px;top:265px;font-size:11px;line-height:11px;font-weight:bold;color:#0000f0;transform:scaleX(1.0475);transform-origin:0 0;"><u>Row Colors</u></div>
<div class="a" style="left:12px;top:282px;width:1245px;height:275px;background:#fff"></div>
<div class="a" style="left:13px;top:283px;width:1243px;height:273px;border:1px solid #000;box-sizing:border-box;background:#fff"></div>
<div class="a" style="left:255px;top:286px;width:278px;height:19px;background:#bcdcf4"></div>
<div class="a" style="left:14px;top:284px;width:1241px;height:1px;background:#d8d8d8"></div>
<div class="a" style="left:64px;top:284px;width:1px;height:21px;background:#e2e2e2"></div>
<div class="a" style="left:119px;top:284px;width:1px;height:21px;background:#e2e2e2"></div>
<div class="a" style="left:175px;top:284px;width:1px;height:21px;background:#e2e2e2"></div>
<div class="a" style="left:254px;top:284px;width:1px;height:21px;background:#e2e2e2"></div>
<div class="a" style="left:533px;top:284px;width:1px;height:21px;background:#e2e2e2"></div>
<div class="a" style="left:592px;top:284px;width:1px;height:21px;background:#e2e2e2"></div>
<div class="a" style="left:643px;top:284px;width:1px;height:21px;background:#e2e2e2"></div>
<div class="a" style="left:864px;top:284px;width:1px;height:21px;background:#e2e2e2"></div>
<div class="a" style="left:944px;top:284px;width:1px;height:21px;background:#e2e2e2"></div>
<div class="a" style="left:1002px;top:284px;width:1px;height:21px;background:#e2e2e2"></div>
<div class="a" style="left:1062px;top:284px;width:1px;height:21px;background:#e2e2e2"></div>
<div class="a" style="left:1146px;top:284px;width:1px;height:21px;background:#e2e2e2"></div>
<div class="a" style="left:175px;top:371px;width:1078px;height:44px;background:#f2f785"></div>
<div class="a" style="left:14px;top:415px;width:1241px;height:22px;background:#c0c0c0"></div>
<div class="a" style="left:14px;top:305px;width:1241px;height:1px;background:#a0a0a0"></div>
<div class="a" style="left:14px;top:327px;width:1241px;height:1px;background:#a0a0a0"></div>
<div class="a" style="left:14px;top:349px;width:1241px;height:1px;background:#a0a0a0"></div>
<div class="a" style="left:14px;top:371px;width:1241px;height:1px;background:#a0a0a0"></div>
<div class="a" style="left:14px;top:393px;width:1241px;height:1px;background:#a0a0a0"></div>
<div class="a" style="left:14px;top:415px;width:1241px;height:1px;background:#a0a0a0"></div>
<div class="a" style="left:14px;top:437px;width:1241px;height:1px;background:#a0a0a0"></div>
<div class="a" style="left:64px;top:306px;width:1px;height:132px;background:#a0a0a0"></div>
<div class="a" style="left:119px;top:306px;width:1px;height:132px;background:#a0a0a0"></div>
<div class="a" style="left:175px;top:306px;width:1px;height:132px;background:#a0a0a0"></div>
<div class="a" style="left:254px;top:306px;width:1px;height:132px;background:#a0a0a0"></div>
<div class="a" style="left:533px;top:306px;width:1px;height:132px;background:#a0a0a0"></div>
<div class="a" style="left:592px;top:306px;width:1px;height:132px;background:#a0a0a0"></div>
<div class="a" style="left:643px;top:306px;width:1px;height:132px;background:#a0a0a0"></div>
<div class="a" style="left:864px;top:306px;width:1px;height:132px;background:#a0a0a0"></div>
<div class="a" style="left:944px;top:306px;width:1px;height:132px;background:#a0a0a0"></div>
<div class="a" style="left:1002px;top:306px;width:1px;height:132px;background:#a0a0a0"></div>
<div class="a" style="left:1062px;top:306px;width:1px;height:132px;background:#a0a0a0"></div>
<div class="a" style="left:1146px;top:306px;width:1px;height:132px;background:#a0a0a0"></div>
<div class="t" style="left:79.70px;top:290px;font-size:11px;line-height:11px;font-weight:bold;color:#000;transform:scaleX(1.0431);transform-origin:0 0;">Time</div>
<div class="t" style="left:136.50px;top:290px;font-size:11px;line-height:11px;font-weight:bold;color:#000;transform:scaleX(0.9454);transform-origin:0 0;">Rate</div>
<div class="t" style="left:195.50px;top:290px;font-size:11px;line-height:11px;font-weight:bold;color:#000;transform:scaleX(0.9739);transform-origin:0 0;">Part No.</div>
<div class="t" style="left:363.00px;top:290px;font-size:11px;line-height:11px;font-weight:bold;color:#000;transform:scaleX(1.0331);transform-origin:0 0;">Description</div>
<div class="t" style="left:553.00px;top:290px;font-size:11px;line-height:11px;font-weight:bold;color:#000;transform:scaleX(0.9545);transform-origin:0 0;">Size</div>
<div class="t" style="left:610.40px;top:290px;font-size:11px;line-height:11px;font-weight:bold;color:#000;transform:scaleX(0.9235);transform-origin:0 0;">Qty</div>
<div class="t" style="left:725.50px;top:290px;font-size:11px;line-height:11px;font-weight:bold;color:#000;transform:scaleX(1.0104);transform-origin:0 0;">Tech Name</div>
<div class="t" style="left:880.00px;top:290px;font-size:11px;line-height:11px;font-weight:bold;color:#000;transform:scaleX(1.0222);transform-origin:0 0;">Extended</div>
<div class="t" style="left:964.00px;top:290px;font-size:11px;line-height:11px;font-weight:bold;color:#000;transform:scaleX(0.9292);transform-origin:0 0;">Sale</div>
<div class="t" style="left:1019.60px;top:290px;font-size:11px;line-height:11px;font-weight:bold;color:#000;transform:scaleX(1.0000);transform-origin:0 0;">Price</div>
<div class="t" style="left:1095.80px;top:290px;font-size:11px;line-height:11px;font-weight:bold;color:#000;transform:scaleX(1.0153);transform-origin:0 0;">List</div>
<div class="t" style="left:1180.00px;top:290px;font-size:11px;line-height:11px;font-weight:bold;color:#000;transform:scaleX(1.0426);transform-origin:0 0;">MfgCode</div>
<div class="t" style="left:-208.50px;width:600px;text-align:center;top:312.00px;font-size:11px;line-height:11px;font-weight:bold;color:#000;">0.20</div>
<div class="t" style="right:1100.50px;top:312.00px;font-size:11px;line-height:11px;font-weight:bold;color:#000;">$90.00</div>
<div class="t" style="left:258.00px;top:312.00px;font-size:11px;line-height:11px;font-weight:bold;color:#000;">Lube, Oil &amp; Filter LABOR</div>
<div class="t" style="left:647.50px;top:312.00px;font-size:11px;line-height:11px;font-weight:bold;color:#000;">Please , Select</div>
<div class="t" style="right:332.40px;top:312.00px;font-size:11px;line-height:11px;font-weight:bold;color:#000;">$6.50</div>
<div class="t" style="right:274.40px;top:312.00px;font-size:11px;line-height:11px;font-weight:bold;color:#000;">$6.50</div>
<div class="t" style="left:179.40px;top:334.00px;font-size:11px;line-height:11px;font-weight:bold;color:#0c0c92;">ph2850</div>
<div class="t" style="left:258.00px;top:334.00px;font-size:11px;line-height:11px;font-weight:bold;color:#0c0c92;">Oil Filter - Fram</div>
<div class="t" style="right:633.20px;top:334.00px;font-size:11px;line-height:11px;font-weight:bold;color:#0c0c92;">1.00</div>
<div class="t" style="left:647.50px;top:334.00px;font-size:11px;line-height:11px;font-weight:bold;color:#0c0c92;">Please , Select</div>
<div class="t" style="right:332.40px;top:334.00px;font-size:11px;line-height:11px;font-weight:bold;color:#0c0c92;">$14.35</div>
<div class="t" style="right:274.40px;top:334.00px;font-size:11px;line-height:11px;font-weight:bold;color:#0c0c92;">$14.35</div>
<div class="t" style="right:214.40px;top:334.00px;font-size:11px;line-height:11px;font-weight:bold;color:#0c0c92;">$14.35</div>
<div class="t" style="right:130.40px;top:334.00px;font-size:11px;line-height:11px;font-weight:bold;color:#0c0c92;">$0.00</div>
<div class="t" style="left:1150.00px;top:334.00px;font-size:11px;line-height:11px;font-weight:bold;color:#0c0c92;">COO</div>
<div class="t" style="left:179.40px;top:356.00px;font-size:11px;line-height:11px;font-weight:bold;color:#0c0c92;">10w30c</div>
<div class="t" style="left:258.00px;top:356.00px;font-size:11px;line-height:11px;font-weight:bold;color:#0c0c92;">Eng Oil - 10w30 Castrol</div>
<div class="t" style="right:633.20px;top:356.00px;font-size:11px;line-height:11px;font-weight:bold;color:#0c0c92;">4.00</div>
<div class="t" style="left:647.50px;top:356.00px;font-size:11px;line-height:11px;font-weight:bold;color:#0c0c92;">Please , Select</div>
<div class="t" style="right:332.40px;top:356.00px;font-size:11px;line-height:11px;font-weight:bold;color:#0c0c92;">$28.00</div>
<div class="t" style="right:274.40px;top:356.00px;font-size:11px;line-height:11px;font-weight:bold;color:#0c0c92;">$7.00</div>
<div class="t" style="right:214.40px;top:356.00px;font-size:11px;line-height:11px;font-weight:bold;color:#0c0c92;">$7.00</div>
<div class="t" style="right:130.40px;top:356.00px;font-size:11px;line-height:11px;font-weight:bold;color:#0c0c92;">$0.00</div>
<div class="t" style="left:1150.00px;top:356.00px;font-size:11px;line-height:11px;font-weight:bold;color:#0c0c92;">COO</div>
<div class="t" style="left:179.40px;top:378.00px;font-size:11px;line-height:11px;font-weight:bold;color:#000;">B97022</div>
<div class="t" style="left:258.00px;top:378.00px;font-size:11px;line-height:11px;font-weight:bold;color:#000;">Band</div>
<div class="t" style="right:633.20px;top:378.00px;font-size:11px;line-height:11px;font-weight:bold;color:#000;">1.00</div>
<div class="t" style="left:647.50px;top:378.00px;font-size:11px;line-height:11px;font-weight:bold;color:#000;">Please , Select</div>
<div class="t" style="right:332.40px;top:378.00px;font-size:11px;line-height:11px;font-weight:bold;color:#000;">$90.59</div>
<div class="t" style="right:274.40px;top:378.00px;font-size:11px;line-height:11px;font-weight:bold;color:#000;">$90.59</div>
<div class="t" style="right:214.40px;top:378.00px;font-size:11px;line-height:11px;font-weight:bold;color:#000;">$90.59</div>
<div class="t" style="right:130.40px;top:378.00px;font-size:11px;line-height:11px;font-weight:bold;color:#000;">$87.06</div>
<div class="t" style="left:1150.00px;top:378.00px;font-size:11px;line-height:11px;font-weight:bold;color:#000;">TS</div>
<div class="t" style="left:179.40px;top:400.00px;font-size:11px;line-height:11px;font-weight:bold;color:#000;">A97010EA</div>
<div class="t" style="left:258.00px;top:400.00px;font-size:11px;line-height:11px;font-weight:bold;color:#000;">Filter</div>
<div class="t" style="right:633.20px;top:400.00px;font-size:11px;line-height:11px;font-weight:bold;color:#000;">1.00</div>
<div class="t" style="left:647.50px;top:400.00px;font-size:11px;line-height:11px;font-weight:bold;color:#000;">Please , Select</div>
<div class="t" style="right:332.40px;top:400.00px;font-size:11px;line-height:11px;font-weight:bold;color:#000;">$27.80</div>
<div class="t" style="right:274.40px;top:400.00px;font-size:11px;line-height:11px;font-weight:bold;color:#000;">$27.80</div>
<div class="t" style="right:214.40px;top:400.00px;font-size:11px;line-height:11px;font-weight:bold;color:#000;">$27.80</div>
<div class="t" style="right:130.40px;top:400.00px;font-size:11px;line-height:11px;font-weight:bold;color:#000;">$28.63</div>
<div class="t" style="left:1150.00px;top:400.00px;font-size:11px;line-height:11px;font-weight:bold;color:#000;">TS</div>
<div class="t" style="left:-208.50px;width:600px;text-align:center;top:422.00px;font-size:11px;line-height:11px;font-weight:bold;color:#000;">0.00</div>
<div class="t" style="right:633.20px;top:422.00px;font-size:11px;line-height:11px;font-weight:bold;color:#000;">0.00</div>
<div class="t" style="left:647.50px;top:422.00px;font-size:11px;line-height:11px;font-weight:bold;color:#000;">&lt;None&gt;</div>
<div class="t" style="right:332.40px;top:422.00px;font-size:11px;line-height:11px;font-weight:bold;color:#000;">$0.00</div>
<div class="t" style="right:274.40px;top:422.00px;font-size:11px;line-height:11px;font-weight:bold;color:#000;">$0.00</div>
<div class="t" style="right:214.40px;top:422.00px;font-size:11px;line-height:11px;font-weight:bold;color:#000;">$0.00</div>
<div class="t" style="right:130.40px;top:422.00px;font-size:11px;line-height:11px;font-weight:bold;color:#000;">$0.00</div>
<div class="a" style="left:14px;top:539px;width:1241px;height:16px;background:#f0f0f0"></div>
<div class="a" style="left:31px;top:539px;width:871px;height:16px;background:#cdcdcd"></div>
<svg class="a" style="left:17px;top:541px" width="12" height="12" viewBox="0 0 12 12"><path d="M7.7 2.2 L2.2 5.4 L7.7 8.6" fill="none" stroke="#606060" stroke-width="2"/></svg>
<svg class="a" style="left:1240px;top:541px" width="12" height="12" viewBox="0 0 12 12"><path d="M4.4 2.3 L9.6 5.5 L4.4 8.7" fill="none" stroke="#606060" stroke-width="2"/></svg>
<div class="a" style="left:13px;top:563px;width:1243px;height:97px;border:1px solid #6e6e6e;box-sizing:border-box;border-right-color:#6e6e6e"></div>
<svg class="a" style="left:17px;top:567px" width="58" height="28" viewBox="0 0 58 28"><rect x="0" y="0" width="58" height="28" fill="#000"/><rect x="2" y="2" width="54" height="24" fill="#fff"/><path d="M56 2 V26 H2 L3.5 24.5 H54.5 V3.5 Z" fill="#7a7a7a"/><rect x="3.5" y="3.5" width="51" height="21" fill="#c0c0c0"/><text x="15.1" y="12.8" font-family="Liberation Sans" font-size="11.6" textLength="20" lengthAdjust="spacingAndGlyphs" fill="#1a1f3a" font-weight="bold" stroke="#1a1f3a" stroke-width="0.5">FIRST</text><text x="15.1" y="23.8" font-family="Liberation Sans" font-size="15" textLength="20" lengthAdjust="spacingAndGlyphs" fill="#1a1f3a" font-weight="bold" stroke="#1a1f3a" stroke-width="0.5">CALL</text><text transform="translate(35.3 4.3) rotate(90)" y="0" font-family="Liberation Sans" font-weight="bold" font-size="9.5" textLength="19.5" lengthAdjust="spacingAndGlyphs" fill="#1a1f3a" stroke="#1a1f3a" stroke-width="0.6">ONLINE</text></svg>
<svg class="a" style="left:79px;top:567px" width="58" height="28" viewBox="0 0 58 28"><rect x="0" y="0" width="58" height="28" fill="#000"/><rect x="2" y="2" width="54" height="24" fill="#fff"/><path d="M56 2 V26 H2 L3.5 24.5 H54.5 V3.5 Z" fill="#7a7a7a"/><rect x="3.5" y="3.5" width="51" height="21" fill="#c0c0c0"/><path d="M25.5 12.5 Q27 9 31 7.5 Q35 6 38.5 6.2 Q38 8.8 35 9.5 Q31.5 10 30.5 11 L29 13 Q27 13.2 25.5 12.5 Z" fill="#111"/><path d="M19.3 14 Q21 11 26 10.5 Q28.5 10.3 29.8 11.2 Q27.5 12.2 27.2 14 Q23.5 16.2 19.3 14 Z" fill="#e01010"/><text x="7.1" y="21.9" font-family="Liberation Sans" font-weight="bold" font-size="6.6" textLength="43.4" lengthAdjust="spacing" fill="#111">ACTIVANT</text></svg>
<svg class="a" style="left:141px;top:567px" width="58" height="28" viewBox="0 0 58 28"><rect x="0" y="0" width="58" height="28" fill="#000"/><rect x="2" y="2" width="54" height="24" fill="#fff"/><path d="M56 2 V26 H2 L3.5 24.5 H54.5 V3.5 Z" fill="#7a7a7a"/><rect x="3.5" y="3.5" width="51" height="21" fill="#c0c0c0"/><defs><linearGradient id="ag" x1="0" y1="0" x2="0" y2="1"><stop offset="0" stop-color="#a80d20"/><stop offset="1" stop-color="#e0203a"/></linearGradient></defs><text x="20.6" y="20.6" font-family="Liberation Sans" font-size="19.6" textLength="30.6" lengthAdjust="spacingAndGlyphs" fill="url(#ag)" font-weight="bold" stroke="#c0102a" stroke-width="0.9">TD</text><path d="M12.8 6.3 H19.7 L21.7 13.2 Q17.5 9.8 12.8 9.2 Z" fill="url(#ag)"/><path d="M5.9 10.9 Q16.5 11 23.7 20.9 H19.9 Q14.5 14.6 7.2 13.3 Z" fill="#d0142c"/><path d="M9.9 16.1 L13.8 16.8 L12.5 20.9 H8.1 Z" fill="#e01a30"/></svg>
<svg class="a" style="left:203px;top:567px" width="58" height="28" viewBox="0 0 58 28"><rect x="0" y="0" width="58" height="28" fill="#555"/><rect x="2" y="2" width="54" height="24" fill="#f2f2f2"/><ellipse cx="11.1" cy="6.6" rx="3.6" ry="3.1" fill="none" stroke="#2a8ad8" stroke-width="1.3"/><path d="M9.6 5 V8.2 M12.6 5 V8.2 M9.6 6.6 H12.6" stroke="#2a8ad8" stroke-width="0.9"/><text x="16.2" y="9.6" font-family="Liberation Sans" font-size="8.6" textLength="35" lengthAdjust="spacingAndGlyphs" fill="#2a8ad8" font-weight="bold" stroke="#2a8ad8" stroke-width="0.5">HONDA</text><rect x="7.2" y="12.8" width="44.3" height="1" fill="#777"/><ellipse cx="11.1" cy="20.6" rx="3.6" ry="3.1" fill="none" stroke="#aaa" stroke-width="1"/><text x="15.3" y="23.6" font-family="Liberation Sans" font-size="8.6" textLength="35.4" lengthAdjust="spacingAndGlyphs" fill="#1a3370" font-weight="bold" stroke="#1a3370" stroke-width="0.5">ACURA</text></svg>
<svg class="a" style="left:265px;top:567px" width="58" height="28" viewBox="0 0 58 28"><rect x="0" y="0" width="58" height="28" fill="#000"/><rect x="2" y="2" width="54" height="24" fill="#fff"/><path d="M56 2 V26 H2 L3.5 24.5 H54.5 V3.5 Z" fill="#7a7a7a"/><rect x="3.5" y="3.5" width="51" height="21" fill="#c0c0c0"/><rect x="4.8" y="7.7" width="7.8" height="6.9" rx="2.5" fill="#f6c21c"/><rect x="6.5" y="10" width="4.4" height="2" fill="#2050a0"/><text x="12.6" y="17.5" font-family="Liberation Sans" font-size="13.7" textLength="21.4" lengthAdjust="spacingAndGlyphs" fill="#f0203a" font-weight="bold" font-style="italic" stroke="#2040a0" stroke-width="0.9" paint-order="stroke">PRO</text><text x="33.6" y="20.4" font-family="Liberation Sans" font-size="12.3" textLength="18.4" lengthAdjust="spacingAndGlyphs" fill="#ffd020" font-weight="bold" font-style="italic" stroke="#2040a0" stroke-width="0.9" paint-order="stroke">Link</text></svg>
<svg class="a" style="left:327px;top:567px" width="58" height="28" viewBox="0 0 58 28"><rect x="0" y="0" width="58" height="28" fill="#000"/><rect x="2" y="2" width="54" height="24" fill="#fff"/><path d="M56 2 V26 H2 L3.5 24.5 H54.5 V3.5 Z" fill="#7a7a7a"/><rect x="3.5" y="3.5" width="51" height="21" fill="#c0c0c0"/><text x="5.7" y="17.5" font-family="Liberation Sans" font-size="11.6" textLength="12.6" lengthAdjust="spacingAndGlyphs" fill="#141e78" font-weight="bold" font-style="italic">ne</text><text x="18.6" y="17.5" font-family="Liberation Sans" font-size="11.6" textLength="6.5" lengthAdjust="spacingAndGlyphs" fill="#d82020" font-weight="bold" font-style="italic">x</text><text x="25.3" y="17.5" font-family="Liberation Sans" font-size="11.6" textLength="26.7" lengthAdjust="spacingAndGlyphs" fill="#141e78" font-weight="bold" font-style="italic">part</text><path d="M27.6 19.6 H51.5" stroke="#d82020" stroke-width="1.3"/><path d="M51 18 L53.5 19.6 L51 21.2" stroke="#d82020" stroke-width="1" fill="none"/></svg>
<svg class="a" style="left:389px;top:567px" width="58" height="28" viewBox="0 0 58 28"><defs><linearGradient id="pg" x1="0" y1="0" x2="0" y2="1"><stop offset="0" stop-color="#cfe3f6"/><stop offset="1" stop-color="#eef5fc"/></linearGradient></defs><rect x="1" y="1" width="56" height="26" rx="4.5" fill="url(#pg)" stroke="#2f7cc0" stroke-width="2"/><text x="2.6" y="11.2" font-family="Liberation Sans" font-size="8.2" textLength="52.4" lengthAdjust="spacingAndGlyphs" fill="#e41c1c" font-weight="bold" stroke="#e41c1c" stroke-width="0.5">Parts Authority</text><text x="2.6" y="22.9" font-family="Liberation Serif" font-weight="bold" font-size="13.3" textLength="28" lengthAdjust="spacingAndGlyphs" fill="#e41c1c" stroke="#e41c1c" stroke-width="0.5">IMC</text><text x="35" y="22.9" font-family="Liberation Sans" font-size="12.3" textLength="8.8" lengthAdjust="spacingAndGlyphs" fill="#e41c1c" font-weight="bold" font-style="italic" stroke="#e41c1c" stroke-width="0.6">W</text><text x="43.8" y="22.9" font-family="Liberation Sans" font-size="13" textLength="10.7" lengthAdjust="spacingAndGlyphs" fill="#1a2a5a" font-weight="bold" font-style="italic" stroke="#1a2a5a" stroke-width="0.6">w</text></svg>
<svg class="a" style="left:451px;top:567px" width="58" height="28" viewBox="0 0 58 28"><rect x="0" y="0" width="58" height="28" fill="#000"/><rect x="2" y="2" width="54" height="24" fill="#fff"/><path d="M56 2 V26 H2 L3.5 24.5 H54.5 V3.5 Z" fill="#8a8a8a"/><rect x="3.5" y="3.5" width="51" height="21" fill="#f0f0f0"/><ellipse cx="39.3" cy="14.2" rx="7.2" ry="10" transform="rotate(20 39.3 14.2)" fill="none" stroke="#1a2a6a" stroke-width="1.1"/><text x="5.7" y="18.5" font-family="Liberation Sans" font-size="14" textLength="21.4" lengthAdjust="spacingAndGlyphs" fill="#f2ac12" font-weight="bold" font-style="italic">Tire</text><text x="27.1" y="18.5" font-family="Liberation Sans" font-size="14" textLength="23.9" lengthAdjust="spacingAndGlyphs" fill="#1a2a6a" font-weight="bold">web</text><circle cx="34.4" cy="8.7" r="1.3" fill="#f0c020"/><circle cx="42.8" cy="20.9" r="1.3" fill="#f0c020"/></svg>
<svg class="a" style="left:513px;top:567px" width="58" height="28" viewBox="0 0 58 28"><defs><linearGradient id="tg" x1="0" y1="0" x2="0" y2="1"><stop offset="0" stop-color="#28b4f0"/><stop offset="0.6" stop-color="#1a8ed6"/><stop offset="1" stop-color="#1577c0"/></linearGradient></defs><rect x="0.7" y="0.7" width="56.6" height="26.6" fill="url(#tg)" stroke="#30d4ff" stroke-width="1.4"/><path d="M3 19.5 Q29 16 55 19.5 V25.5 H3 Z" fill="#0b4a92"/><text x="6.3" y="17" font-family="Liberation Sans" font-size="12.3" textLength="46.7" lengthAdjust="spacingAndGlyphs" fill="#fff" letter-spacing="1">transend</text></svg>
<svg class="a" style="left:575px;top:567px" width="58" height="28" viewBox="0 0 58 28"><rect x="0" y="0" width="58" height="28" fill="#000"/><rect x="2" y="2" width="54" height="24" fill="#fff"/><path d="M56 2 V26 H2 L3.5 24.5 H54.5 V3.5 Z" fill="#7a7a7a"/><rect x="3.5" y="3.5" width="51" height="21" fill="#dcdcdc"/><text x="4.7" y="13.6" font-family="Liberation Sans" font-size="10.9" textLength="30.3" lengthAdjust="spacingAndGlyphs" fill="#1a1a1a" font-weight="bold" font-style="italic">WORLD</text><text x="35" y="13.6" font-family="Liberation Sans" font-size="10.9" textLength="17" lengthAdjust="spacingAndGlyphs" fill="#e82020" font-weight="bold" font-style="italic">PAC</text><rect x="4.7" y="15" width="47.3" height="0.9" fill="#555"/><text x="5.2" y="21.9" font-family="Liberation Sans" font-size="6.8" textLength="47.8" lengthAdjust="spacingAndGlyphs" fill="#ee1818" font-weight="bold" font-style="italic">SPEED DIAL</text></svg>
<div class="t" style="left:121.62px;top:603px;font-size:11px;line-height:11px;font-weight:bold;color:#000;transform:scaleX(1.0900);transform-origin:0 0;">Parts</div>
<div class="t" style="left:200.55px;top:603px;font-size:11px;line-height:11px;font-weight:bold;color:#000;transform:scaleX(1.0900);transform-origin:0 0;">Labor</div>
<div class="t" style="left:271.26px;top:603px;font-size:11px;line-height:11px;font-weight:bold;color:#000;transform:scaleX(1.0900);transform-origin:0 0;">Sub Total</div>
<div class="t" style="left:352.39px;top:603px;font-size:11px;line-height:11px;font-weight:bold;color:#000;transform:scaleX(1.0900);transform-origin:0 0;">Haz Mat.</div>
<div class="t" style="left:427.08px;top:603px;font-size:11px;line-height:11px;font-weight:bold;color:#000;transform:scaleX(1.0900);transform-origin:0 0;">Supplies</div>
<div class="t" style="left:521.27px;top:603px;font-size:11px;line-height:11px;font-weight:bold;color:#000;transform:scaleX(1.0900);transform-origin:0 0;">Tax</div>
<div class="t" style="left:595.21px;top:603px;font-size:11px;line-height:11px;font-weight:bold;color:#000;transform:scaleX(1.0900);transform-origin:0 0;">Total</div>
<div class="t" style="left:944.87px;top:603px;font-size:11px;line-height:11px;font-weight:bold;color:#000;transform:scaleX(1.0900);transform-origin:0 0;">Inv. Bal.</div>
<div class="a" style="left:14px;top:617px;width:61px;height:1px;background:#a0a0a0"></div>
<div class="a" style="left:81px;top:617px;width:76px;height:1px;background:#a0a0a0"></div>
<div class="a" style="left:163px;top:617px;width:75.5px;height:1px;background:#a0a0a0"></div>
<div class="a" style="left:245px;top:617px;width:85px;height:1px;background:#a0a0a0"></div>
<div class="a" style="left:336.5px;top:617px;width:69.5px;height:1px;background:#a0a0a0"></div>
<div class="a" style="left:412.5px;top:617px;width:69.0px;height:1px;background:#a0a0a0"></div>
<div class="a" style="left:488px;top:617px;width:58px;height:1px;background:#a0a0a0"></div>
<div class="a" style="left:552px;top:617px;width:75.5px;height:1px;background:#a0a0a0"></div>
<div class="a" style="left:634px;top:617px;width:265.5px;height:1px;background:#a0a0a0"></div>
<div class="a" style="left:906px;top:617px;width:89px;height:1px;background:#a0a0a0"></div>
<div class="t" style="left:33.69px;top:621px;font-size:11px;line-height:11px;font-weight:bold;color:#000;transform:scaleX(1.0900);transform-origin:0 0;">Invoice</div>
<div class="t" style="left:24.97px;top:639px;font-size:11px;line-height:11px;font-weight:bold;color:#000;transform:scaleX(1.0900);transform-origin:0 0;">Estimate</div>
<div class="t" style="left:119.88px;top:621px;font-size:11px;line-height:11px;font-weight:bold;color:#000;transform:scaleX(1.0900);transform-origin:0 0;">160.74</div>
<div class="t" style="left:215.07px;top:621px;font-size:11px;line-height:11px;font-weight:bold;color:#000;transform:scaleX(1.0900);transform-origin:0 0;">6.50</div>
<div class="t" style="left:293.38px;top:621px;font-size:11px;line-height:11px;font-weight:bold;color:#000;transform:scaleX(1.0900);transform-origin:0 0;">167.24</div>
<div class="t" style="left:382.67px;top:621px;font-size:11px;line-height:11px;font-weight:bold;color:#000;transform:scaleX(1.0900);transform-origin:0 0;">4.97</div>
<div class="t" style="left:458.17px;top:621px;font-size:11px;line-height:11px;font-weight:bold;color:#000;transform:scaleX(1.0900);transform-origin:0 0;">0.33</div>
<div class="t" style="left:516.02px;top:621px;font-size:11px;line-height:11px;font-weight:bold;color:#000;transform:scaleX(1.0900);transform-origin:0 0;">12.46</div>
<div class="t" style="left:590.78px;top:621px;font-size:11px;line-height:11px;font-weight:bold;color:#000;transform:scaleX(1.0900);transform-origin:0 0;">185.00</div>
<div class="t" style="left:958.08px;top:621px;font-size:11px;line-height:11px;font-weight:bold;color:#000;transform:scaleX(1.0900);transform-origin:0 0;">185.00</div>
<div class="t" style="left:126.53px;top:639px;font-size:11px;line-height:11px;font-weight:bold;color:#000;transform:scaleX(1.0900);transform-origin:0 0;">42.35</div>
<div class="t" style="left:201.78px;top:639px;font-size:11px;line-height:11px;font-weight:bold;color:#000;transform:scaleX(1.0900);transform-origin:0 0;">126.20</div>
<div class="t" style="left:293.38px;top:639px;font-size:11px;line-height:11px;font-weight:bold;color:#000;transform:scaleX(1.0900);transform-origin:0 0;">168.55</div>
<div class="t" style="left:382.67px;top:639px;font-size:11px;line-height:11px;font-weight:bold;color:#000;transform:scaleX(1.0900);transform-origin:0 0;">4.97</div>
<div class="t" style="left:458.17px;top:639px;font-size:11px;line-height:11px;font-weight:bold;color:#000;transform:scaleX(1.0900);transform-origin:0 0;">6.31</div>
<div class="t" style="left:522.67px;top:639px;font-size:11px;line-height:11px;font-weight:bold;color:#000;transform:scaleX(1.0900);transform-origin:0 0;">3.28</div>
<div class="t" style="left:591.43px;top:639px;font-size:11px;line-height:11px;font-weight:bold;color:#000;transform:scaleX(1.0900);transform-origin:0 0;">183.11</div>
<div class="a" style="left:14px;top:670px;width:126px;height:23px;background:#e1e1e1;border:1px solid #adadad;box-sizing:border-box;"></div>
<div class="t" style="left:-223.00px;width:600px;text-align:center;top:676.00px;font-size:11.3px;line-height:11.3px;font-weight:bold;color:#000;">Convert to Invoice</div>
<div class="a" style="left:146px;top:670px;width:111px;height:23px;background:#e1e1e1;border:1px solid #adadad;box-sizing:border-box;"></div>
<div class="t" style="left:-98.50px;width:600px;text-align:center;top:676.00px;font-size:11.5px;line-height:11.5px;font-weight:bold;color:#000;">Parts Ordering</div>
<div class="a" style="left:264px;top:670px;width:126px;height:23px;background:#e1e1e1;border:1px solid #adadad;box-sizing:border-box;"></div>
<div class="t" style="left:27.00px;width:600px;text-align:center;top:676.00px;font-size:11.5px;line-height:11.5px;font-weight:bold;color:#000;"></div>
<div class="t" style="left:371.00px;top:676.00px;font-size:11.5px;line-height:11.5px;font-weight:bold;color:#1010d0;">s</div>
<div class="a" style="left:814px;top:670px;width:69px;height:23px;background:#e1e1e1;border:1px solid #adadad;box-sizing:border-box;"></div>
<div class="t" style="left:548.50px;width:600px;text-align:center;top:676.00px;font-size:11.5px;line-height:11.5px;font-weight:bold;color:#000;">Options</div>
<div class="a" style="left:889px;top:670px;width:77px;height:23px;background:#e1e1e1;border:1px solid #adadad;box-sizing:border-box;"></div>
<div class="t" style="left:627.50px;width:600px;text-align:center;top:676.00px;font-size:11.5px;line-height:11.5px;font-weight:bold;color:#000;">View PO</div>
<div class="a" style="left:972px;top:670px;width:81px;height:23px;background:#e1e1e1;border:1px solid #adadad;box-sizing:border-box;"></div>
<div class="t" style="left:712.50px;width:600px;text-align:center;top:676.00px;font-size:11.5px;line-height:11.5px;font-weight:bold;color:#000;">Worksheet</div>
<div class="a" style="left:1150px;top:670px;width:48px;height:23px;background:#e1e1e1;border:1px solid #adadad;box-sizing:border-box;"></div>
<div class="t" style="left:874.00px;width:600px;text-align:center;top:676.00px;font-size:11.5px;line-height:11.5px;font-weight:bold;color:#000;">Print</div>
<div class="a" style="left:1204px;top:670px;width:52px;height:23px;background:#e1e1e1;border:1px solid #adadad;box-sizing:border-box;"></div>
<div class="t" style="left:930.00px;width:600px;text-align:center;top:676.00px;font-size:11.5px;line-height:11.5px;font-weight:bold;color:#000;">Exit</div>
<div class="a" style="left:1059px;top:670px;width:85px;height:23px;background:#e1e1e1;border:1px solid #adadad;box-sizing:border-box;"></div>
<div class="t" style="left:1086.00px;top:676.00px;font-size:11.5px;line-height:11.5px;font-weight:bold;color:#000;">Share</div>
<svg class="a" style="left:1126px;top:676px" width="14" height="10" viewBox="0 0 14 10"><path d="M2 2 L7 7 L12 2" fill="none" stroke="#333" stroke-width="2.2"/></svg>
<div class="a" style="left:1px;top:708px;width:1269px;height:1px;background:#d4d4d4"></div>
<div class="t" style="left:5.50px;top:713px;font-size:12px;line-height:12px;font-weight:normal;color:#000;transform:scaleX(0.9078);transform-origin:0 0;">Ready</div>
<div class="t" style="left:954.00px;top:713px;font-size:12px;line-height:12px;font-weight:normal;color:#000;transform:scaleX(0.9864);transform-origin:0 0;">M1SkInt</div>
<div class="t" style="left:1024.50px;top:713px;font-size:12px;line-height:12px;font-weight:normal;color:#000;transform:scaleX(0.9175);transform-origin:0 0;">Manager SE</div>
<div class="a" style="left:1100px;top:710px;width:1px;height:20px;background:#c8c8c8"></div>
<div class="t" style="left:1114.70px;top:713px;font-size:12px;line-height:12px;font-weight:normal;color:#000;transform:scaleX(0.9124);transform-origin:0 0;">8.4.0.85</div>
<div class="a" style="left:1168px;top:710px;width:1px;height:20px;background:#c8c8c8"></div>
<div class="t" style="left:1183.20px;top:713px;font-size:12px;line-height:12px;font-weight:normal;color:#000;transform:scaleX(0.9324);transform-origin:0 0;">TIM</div>
<svg class="a" style="left:1226px;top:709px" width="20" height="20" viewBox="0 0 20 20"><defs><radialGradient id="dg" cx="0.4" cy="0.3" r="0.8"><stop offset="0" stop-color="#e8f2fc"/><stop offset="1" stop-color="#5a8ad8"/></radialGradient></defs><path d="M3.5 5 Q1.5 10 5 14 Q8 16.5 11 15 Z" fill="url(#dg)" stroke="#4a70c0" stroke-width="0.6"/><path d="M7 11 L10 8" stroke="#3050a0" stroke-width="0.8"/><path d="M3.5 15.5 H11 V17.5 H3.5 Z" fill="#9a9a9a"/><ellipse cx="15" cy="12.3" rx="3.4" ry="4.3" fill="#4ca04c"/><path d="M11.5 2.5 Q13.5 3.5 13.5 5.5 M13 1.8 Q15.5 3 15.2 5.5" stroke="#e82020" stroke-width="0.9" fill="none"/></svg>
<div class="a" style="left:1266.5px;top:716.5px;width:2px;height:2px;background:#a8a8a8"></div>
<div class="a" style="left:1262.5px;top:721px;width:2px;height:2px;background:#a8a8a8"></div>
<div class="a" style="left:1266.5px;top:721px;width:2px;height:2px;background:#a8a8a8"></div>
<div class="a" style="left:1257.5px;top:725px;width:2px;height:2px;background:#a8a8a8"></div>
<div class="a" style="left:1262.5px;top:725px;width:2px;height:2px;background:#a8a8a8"></div>
<div class="a" style="left:1266.5px;top:725px;width:2px;height:2px;background:#a8a8a8"></div>
<div class="a" style="left:143px;top:664px;width:117px;height:34px;border:3px solid #ef4444;box-sizing:border-box;box-shadow:2px 3px 4px rgba(0,0,0,0.35)"></div>
<svg class="a" style="left:255px;top:660px" width="130" height="45" viewBox="0 0 130 45"><defs><filter id="sh" x="-20%" y="-20%" width="140%" height="160%"><feGaussianBlur in="SourceAlpha" stdDeviation="2"/><feOffset dx="2" dy="4"/><feComponentTransfer><feFuncA type="linear" slope="0.6"/></feComponentTransfer><feMerge><feMergeNode/><feMergeNode in="SourceGraphic"/></feMerge></filter><radialGradient id="cg" cx="0.45" cy="0.45" r="0.6"><stop offset="0.55" stop-color="#fff"/><stop offset="1" stop-color="#f5b0b0"/></radialGradient></defs><g filter="url(#sh)"><path d="M6.6 20 L35.7 4.5 V15 H88 Q91 15 91 20 Q91 25 88 25 H35.7 V35 Z" fill="#f74545"/></g><circle cx="102.2" cy="21.9" r="14.2" fill="url(#cg)" stroke="#dd0a0a" stroke-width="2.2"/><text x="102.2" y="30.2" font-family="Liberation Sans" font-size="23.5" fill="#000" text-anchor="middle">5</text></svg>
</body></html>
